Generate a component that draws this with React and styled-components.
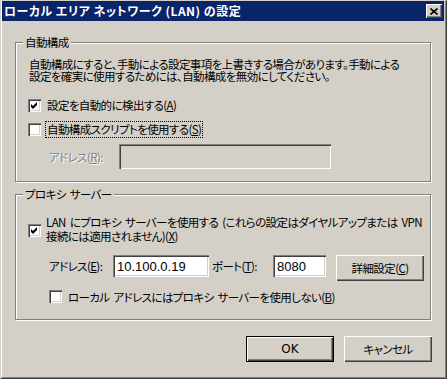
import React from "react";
import styled, { createGlobalStyle, css } from "styled-components";

const Global = createGlobalStyle`
  html, body { margin: 0; padding: 0; background: #d4d0c8; }
  body { font-family: "Noto Sans CJK JP", "Noto Sans", sans-serif; }
  * { box-sizing: border-box; }
`;

const Window = styled.div`
  width: 447px;
  height: 379px;
  background: #d4d0c8;
  border: 1px solid;
  border-color: #d4d0c8 #404040 #404040 #d4d0c8;
  box-shadow: inset 1px 0 #fff, inset -1px -1px #808080;
  padding: 0 2px 2px 1px;
  display: flex;
  flex-direction: column;
  font-family: "Noto Sans CJK JP", "Noto Sans", sans-serif;
  font-size: 11.5px;
  letter-spacing: -0.6px;
  word-spacing: 2px;
  font-feature-settings: "palt";
  color: #000;
`;

const TitleBar = styled.div`
  height: 20px;
  background: #0a246a;
  display: flex;
  align-items: center;
  justify-content: space-between;
  padding: 0 2px 0 2px;
`;

const TitleText = styled.span`
  color: #fff;
  font-weight: bold;
  font-size: 12px;
  letter-spacing: 0.5px;
  word-spacing: 0;
  line-height: 14px;
  white-space: nowrap;
`;

const CloseButton = styled.div`
  width: 16px;
  height: 14px;
  background: #d4d0c8;
  box-shadow: inset 1px 1px #fff, inset -1px -1px #404040, inset -2px -2px #808080;
  display: flex;
  align-items: center;
  justify-content: center;
`;

const Body = styled.div`
  flex: 1;
  display: flex;
  flex-direction: column;
  padding: 21px 13px 0 13px;
`;

const Group = styled.div`
  position: relative;
  width: 416px;
  height: ${(p) => p.$h}px;
  border: 1px solid #808080;
  box-shadow: inset 1px 1px #fff, 1px 1px #fff;
  padding: ${(p) => p.$pt}px 0 0 13px;
  margin-top: ${(p) => p.$mt || 0}px;
  display: flex;
  flex-direction: column;
`;

const Legend = styled.span`
  position: absolute;
  top: -8px;
  left: 7px;
  padding: 0 2px;
  background: #d4d0c8;
  line-height: 14px;
  white-space: nowrap;
`;

const Desc = styled.div`
  line-height: 12px;
  white-space: nowrap;
`;

const CheckRow = styled.div`
  display: flex;
  align-items: ${(p) => (p.$multi ? "flex-start" : "center")};
  height: ${(p) => p.$h || "auto"};
  margin-top: ${(p) => p.$mt || 0}px;
  margin-left: ${(p) => p.$ml ?? -1}px;
`;

const Box = styled.div`
  width: 13px;
  height: 13px;
  flex: none;
  background: #fff;
  box-shadow: inset 1px 1px #808080, inset 2px 2px #404040, inset -1px -1px #fff, inset -2px -2px #d4d0c8;
  display: flex;
  align-items: center;
  justify-content: center;
  margin-top: ${(p) => p.$mt || 0}px;
`;

const CheckLabel = styled.span`
  margin-left: ${(p) => p.$gap || 4}px;
  padding: 0 1px;
  line-height: 15px;
  border: 1px dotted ${(p) => (p.$focus ? "#000" : "transparent")};
  white-space: nowrap;
`;

const PlainLabel = styled.span`
  margin-left: ${(p) => p.$gap || 5}px;
  line-height: ${(p) => p.$lh || 14}px;
  white-space: nowrap;
`;

const FieldRow = styled.div`
  display: flex;
  align-items: flex-start;
  margin-top: ${(p) => p.$mt || 0}px;
  margin-left: 20px;
`;

const FieldLabel = styled.span`
  width: ${(p) => p.$w}px;
  flex: none;
  height: ${(p) => p.$h}px;
  display: flex;
  align-items: center;
  white-space: nowrap;
  margin-left: ${(p) => p.$ml || 0}px;
  ${(p) =>
    p.$disabled &&
    css`
      color: #808080;
      text-shadow: 1px 1px #fff;
    `}
`;

const Input = styled.div`
  width: ${(p) => p.$w}px;
  height: ${(p) => p.$h}px;
  flex: none;
  background: ${(p) => (p.$disabled ? "#d4d0c8" : "#fff")};
  box-shadow: inset 1px 1px #808080, inset 2px 2px #404040, inset -1px -1px #fff, inset -2px -2px #d4d0c8;
  padding: 0 0 0 4px;
  display: flex;
  align-items: center;
  font-family: "Liberation Sans", Arial, sans-serif;
  font-size: 13px;
  letter-spacing: 0;
`;

const Button = styled.div`
  width: 88px;
  height: 26px;
  flex: none;
  background: #d4d0c8;
  display: flex;
  align-items: center;
  justify-content: center;
  margin-left: ${(p) => p.$ml || 0}px;
  box-shadow: inset 1px 1px #fff, inset -1px -1px #404040, inset -2px -2px #808080;
  ${(p) =>
    p.$default &&
    css`
      border: 1px solid #000;
    `}
  white-space: nowrap;
`;

const ButtonText = styled.span`
  font-family: ${(p) => (p.$latin ? '"DejaVu Sans", "Liberation Sans", sans-serif' : '"Noto Sans CJK JP", sans-serif')};
  font-size: ${(p) => (p.$latin ? "12px" : "11.5px")};
  letter-spacing: ${(p) => (p.$latin ? "0" : "-0.6px")};
`;

const ButtonRow = styled.div`
  width: 417px;
  display: flex;
  justify-content: flex-end;
  gap: 10px;
  margin-top: 16px;
`;

const U = styled.span`
  text-decoration: underline;
  text-underline-offset: 1px;
`;

const Check = () => (
  <svg width="7" height="7" viewBox="0 0 7 7">
    <path d="M0 2 L2 4 L6 0 L6 3 L2 7 L0 5 Z" fill="#000" />
  </svg>
);

const CloseGlyph = () => (
  <svg width="8" height="7" viewBox="0 0 8 7">
    <path d="M0.5 0.5 L7.5 6.5 M7.5 0.5 L0.5 6.5" stroke="#000" strokeWidth="1.6" fill="none" />
  </svg>
);

export default function App() {
  return (
    <>
      <Global />
      <Window>
        <TitleBar>
          <TitleText>ローカル エリア ネットワーク (LAN) の設定</TitleText>
          <CloseButton>
            <CloseGlyph />
          </CloseButton>
        </TitleBar>
        <Body>
          <Group $h={140} $pt={15}>
            <Legend>自動構成</Legend>
            <Desc>
              自動構成にすると、手動による設定事項を上書きする場合があります。手動による
              <br />
              設定を確実に使用するためには、自動構成を無効にしてください。
            </Desc>
            <CheckRow $mt={15} $h="17px">
              <Box>
                <Check />
              </Box>
              <CheckLabel>
                設定を自動的に検出する(<U>A</U>)
              </CheckLabel>
            </CheckRow>
            <CheckRow $mt={7} $h="17px">
              <Box />
              <CheckLabel $focus>
                自動構成スクリプトを使用する(<U>S</U>)
              </CheckLabel>
            </CheckRow>
            <FieldRow $mt={6}>
              <FieldLabel $w={70} $h={25} $disabled>
                アドレス(<U>R</U>):
              </FieldLabel>
              <Input $w={212} $h={25} $disabled />
            </FieldRow>
          </Group>

          <Group $h={126} $pt={20} $mt={12}>
            <Legend>プロキシ サーバー</Legend>
            <CheckRow $multi>
              <Box $mt={9}>
                <Check />
              </Box>
              <PlainLabel $gap={5} $lh={14}>
                LAN にプロキシ サーバーを使用する (これらの設定はダイヤルアップまたは VPN
                <br />
                接続には適用されません)(<U>X</U>)
              </PlainLabel>
            </CheckRow>
            <FieldRow $mt={12}>
              <FieldLabel $w={64} $h={22}>
                アドレス(<U>E</U>):
              </FieldLabel>
              <Input $w={96} $h={22}>10.100.0.19</Input>
              <FieldLabel $w={61} $h={22} $ml={3}>
                ポート(<U>T</U>):
              </FieldLabel>
              <Input $w={53} $h={22}>8080</Input>
              <Button $ml={10}>
                <ButtonText>
                  詳細設定(<U>C</U>)
                </ButtonText>
              </Button>
            </FieldRow>
            <CheckRow $ml={20} $mt={9} $h="13px">
              <Box />
              <PlainLabel $gap={6}>
                ローカル アドレスにはプロキシ サーバーを使用しない(<U>B</U>)
              </PlainLabel>
            </CheckRow>
          </Group>

          <ButtonRow>
            <Button $default>
              <ButtonText $latin>OK</ButtonText>
            </Button>
            <Button>
              <ButtonText>キャンセル</ButtonText>
            </Button>
          </ButtonRow>
        </Body>
      </Window>
    </>
  );
}
